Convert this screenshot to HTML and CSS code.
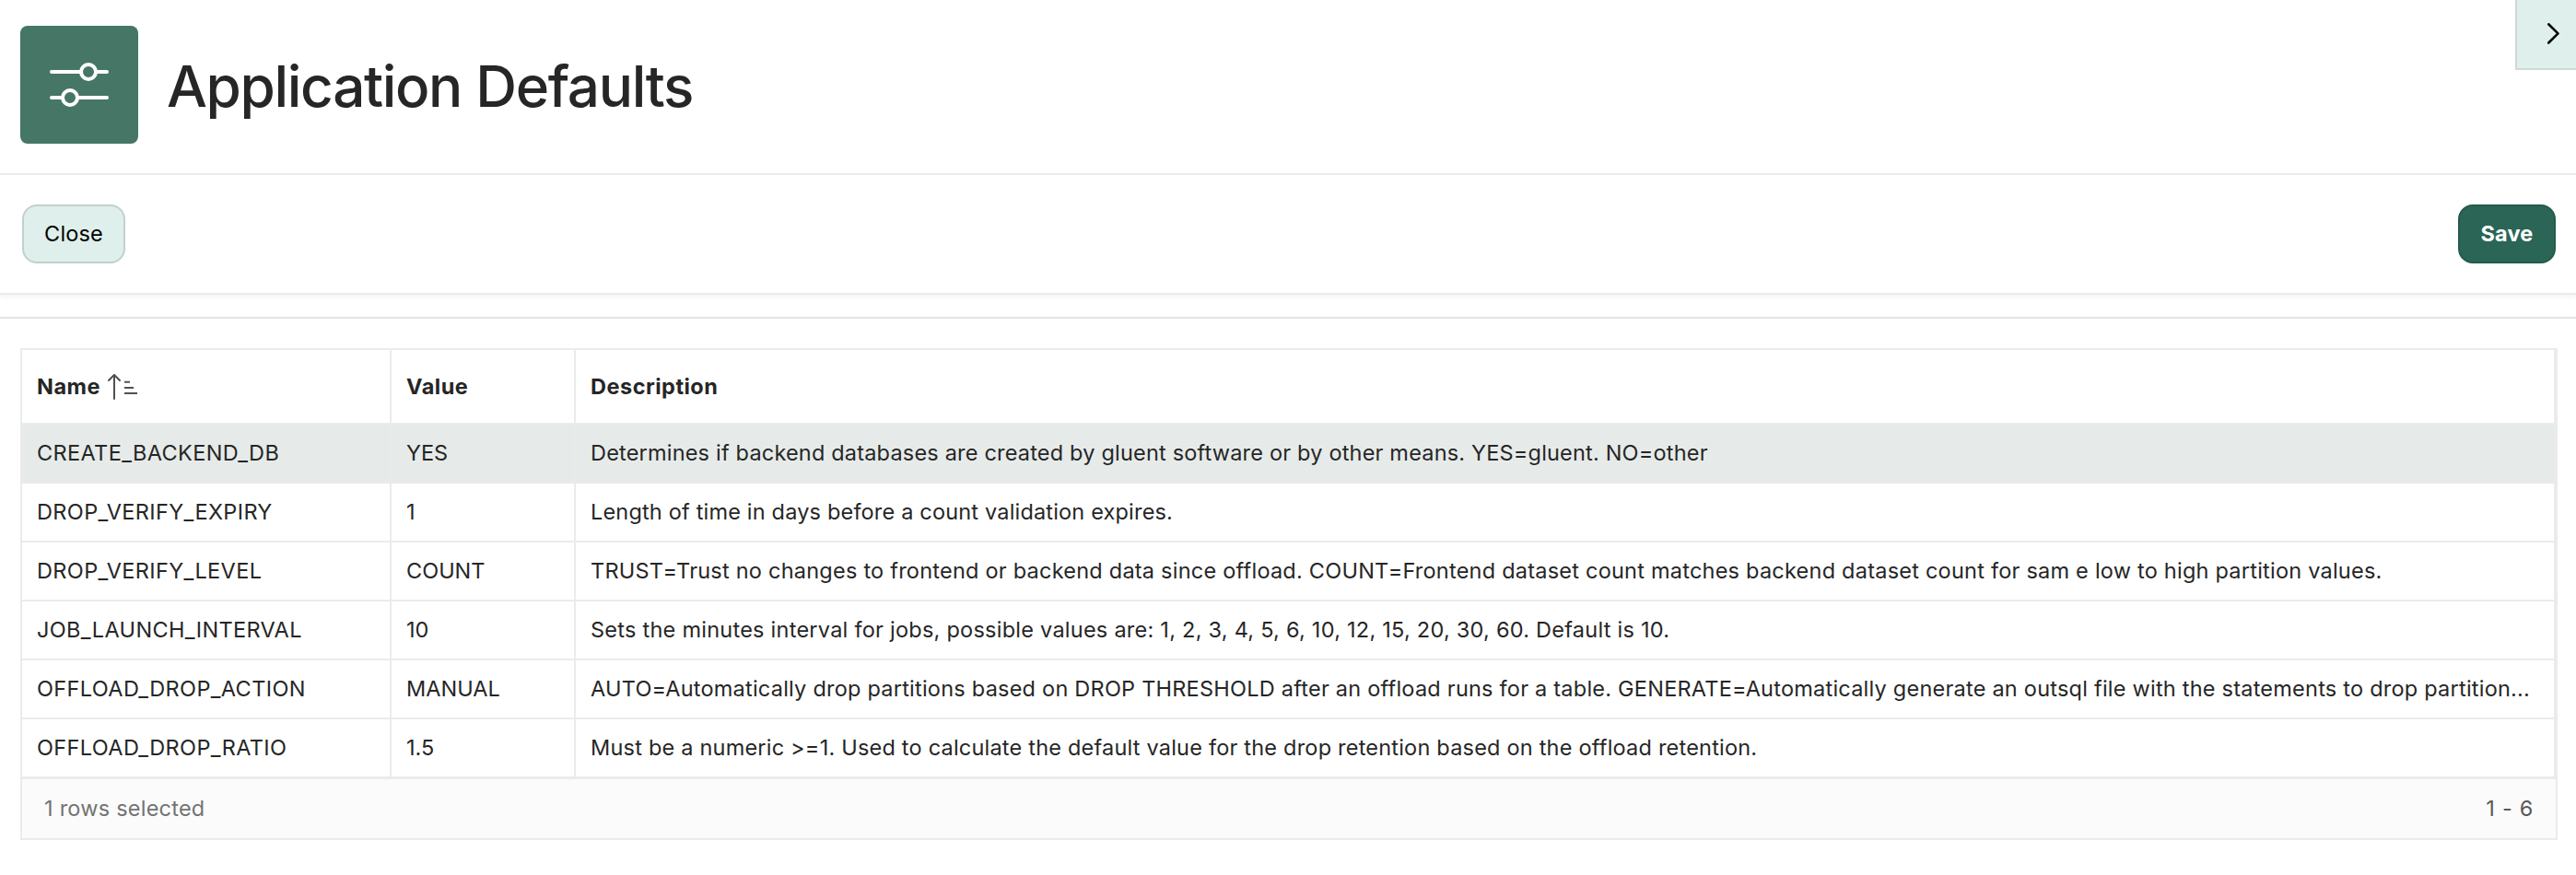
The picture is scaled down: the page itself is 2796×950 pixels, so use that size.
FILE: index.html
```html
<!DOCTYPE html>
<html lang="en">
<head>
<meta charset="utf-8">
<title>Application Defaults</title>
<link rel="stylesheet" href="styles.css">
</head>
<body>
<header class="hero">
  <div class="hero-icon">
    <svg width="64" height="64" viewBox="0 0 64 64" fill="none" stroke="#fff" stroke-width="4" stroke-linecap="round">
      <path d="M2 18H33M51 18H62M2 46H13M31 46H62"/>
      <circle cx="42" cy="18" r="8"/><circle cx="22" cy="46" r="8"/>
    </svg>
  </div>
  <h1 class="title">Application Defaults</h1>
  <button class="toggle" aria-label="Toggle side column">
    <svg width="18" height="28" viewBox="0 0 18 28" fill="none" stroke="#000" stroke-width="2.6" stroke-linecap="round" stroke-linejoin="round"><path d="M3.200 3.300L13.500 13.400L3.200 23.500"/></svg>
  </button>
</header>
<div class="bar">
  <button class="btn">Close</button>
  <button class="btn btn-hot">Save</button>
</div>
<main class="content">
  <section class="grid">
    <div class="row head">
      <div class="cell"><span>Name</span>
        <svg class="sort" width="34" height="30" viewBox="0 0 34 30" fill="none" stroke="#505050" stroke-width="2"><path stroke-linecap="round" stroke-linejoin="round" d="M8 29V3M2 9L8 3L14 9"/><path d="M19 10.700H25M19 17H29M19 23H33"/></svg>
      </div>
      <div class="cell">Value</div>
      <div class="cell">Description</div>
    </div>
    <div class="row selected"><div class="cell">CREATE_BACKEND_DB</div><div class="cell">YES</div><div class="cell desc">Determines if backend databases are created by gluent software or by other means. YES=gluent. NO=other</div></div>
    <div class="row"><div class="cell">DROP_VERIFY_EXPIRY</div><div class="cell">1</div><div class="cell desc">Length of time in days before a count validation expires.</div></div>
    <div class="row"><div class="cell">DROP_VERIFY_LEVEL</div><div class="cell">COUNT</div><div class="cell desc">TRUST=Trust no changes to frontend or backend data since offload. COUNT=Frontend dataset count matches backend dataset count for sam e low to high partition values.</div></div>
    <div class="row"><div class="cell">JOB_LAUNCH_INTERVAL</div><div class="cell">10</div><div class="cell desc">Sets the minutes interval for jobs, possible values are: 1, 2, 3, 4, 5, 6, 10, 12, 15, 20, 30, 60. Default is 10.</div></div>
    <div class="row"><div class="cell">OFFLOAD_DROP_ACTION</div><div class="cell">MANUAL</div><div class="cell desc">AUTO=Automatically drop partitions based on DROP THRESHOLD after an offload runs for a table. GENERATE=Automatically generate an outsql file with the statements to drop partition...</div></div>
    <div class="row"><div class="cell">OFFLOAD_DROP_RATIO</div><div class="cell">1.5</div><div class="cell desc">Must be a numeric &gt;=1. Used to calculate the default value for the drop retention based on the offload retention.</div></div>
    <div class="footer"><span>1 rows selected</span><span class="range">1 - 6</span></div>
  </section>
</main>
</body>
</html>
```
FILE: styles.css
```css
* { box-sizing: border-box; }
body {
  margin: 0;
  background: #fff;
  color: #262626;
  font: 400 23.5px/32px Inter, sans-serif;
}
.hero {
  position: relative;
  display: flex;
  align-items: flex-start;
  gap: 31px;
  height: 190px;
  padding: 28px 22px;
  border-bottom: 2px solid #ebebeb;
}
.hero-icon {
  display: grid;
  place-items: center;
  width: 128px;
  height: 128px;
  border-radius: 8px;
  background: #467665;
}
.title {
  margin: 26px 0 0;
  font-size: 62px;
  font-weight: 500;
  line-height: 80px;
  letter-spacing: -1.35px;
}
.toggle {
  position: absolute;
  top: 0;
  right: 0;
  display: flex;
  align-items: flex-start;
  width: 66px;
  height: 76px;
  padding: 23px 0 0 31px;
  border: solid #cbdbd7;
  border-width: 0 0 2px 2px;
  background: #dfefeb;
}
.bar {
  display: flex;
  justify-content: space-between;
  align-items: center;
  height: 130px;
  padding: 0 22px 0 24px;
  border-bottom: 2px solid #ebebeb;
  box-shadow: 0 2px 6px rgba(0, 0, 0, .06);
}
.btn {
  height: 64px;
  width: 112px;
  padding: 0;
  border: 2px solid #c0d1cd;
  border-radius: 16px;
  background: #dfefeb;
  color: #000;
  font: inherit;
  letter-spacing: .15px;
}
.btn-hot {
  width: 106px;
  border-color: #255a4c;
  background: #2a6555;
  color: #fff;
  font-weight: 700;
}
.content {
  margin-top: 24px;
  padding: 32px 20px 0 22px;
  border-top: 2px solid #e3e3e3;
}
.grid { border: 2px solid #ebebeb; }
.row {
  display: grid;
  grid-template-columns: 401px 200px 1fr;
  height: 64px;
  border-right: 2px solid #ebebeb;
}
.cell {
  padding: 15px 16px 0;
  border-right: 2px solid #ebebeb;
  border-bottom: 2px solid #ebebeb;
  white-space: nowrap;
  overflow: hidden;
}
.cell:first-child { letter-spacing: .37px; }
.cell:last-child { border-right: 0; }
.row .desc { padding-right: 0; letter-spacing: .23px; }
.row:nth-child(2) .desc { letter-spacing: .19px; }
.row:nth-child(3) .desc { letter-spacing: .18px; }
.row:nth-child(5) .desc { letter-spacing: .25px; }
.row:nth-child(7) .desc { letter-spacing: .21px; }
.head { height: 81px; font-weight: 700; }
.head .cell { display: flex; gap: 7px; padding-top: 24px; letter-spacing: .5px; }
.selected { background: #e6ebe9; }
.selected .cell { border-color: #e8ebea; }
.footer {
  display: flex;
  justify-content: space-between;
  margin-top: -1px;
  height: 66px;
  padding: 16px 24px 0;
  background: #fbfbfb;
  border-top: 2px solid #ebebeb;
  color: #737373;
  letter-spacing: .23px;
}
.range { color: #595959; letter-spacing: .7px; }
```
